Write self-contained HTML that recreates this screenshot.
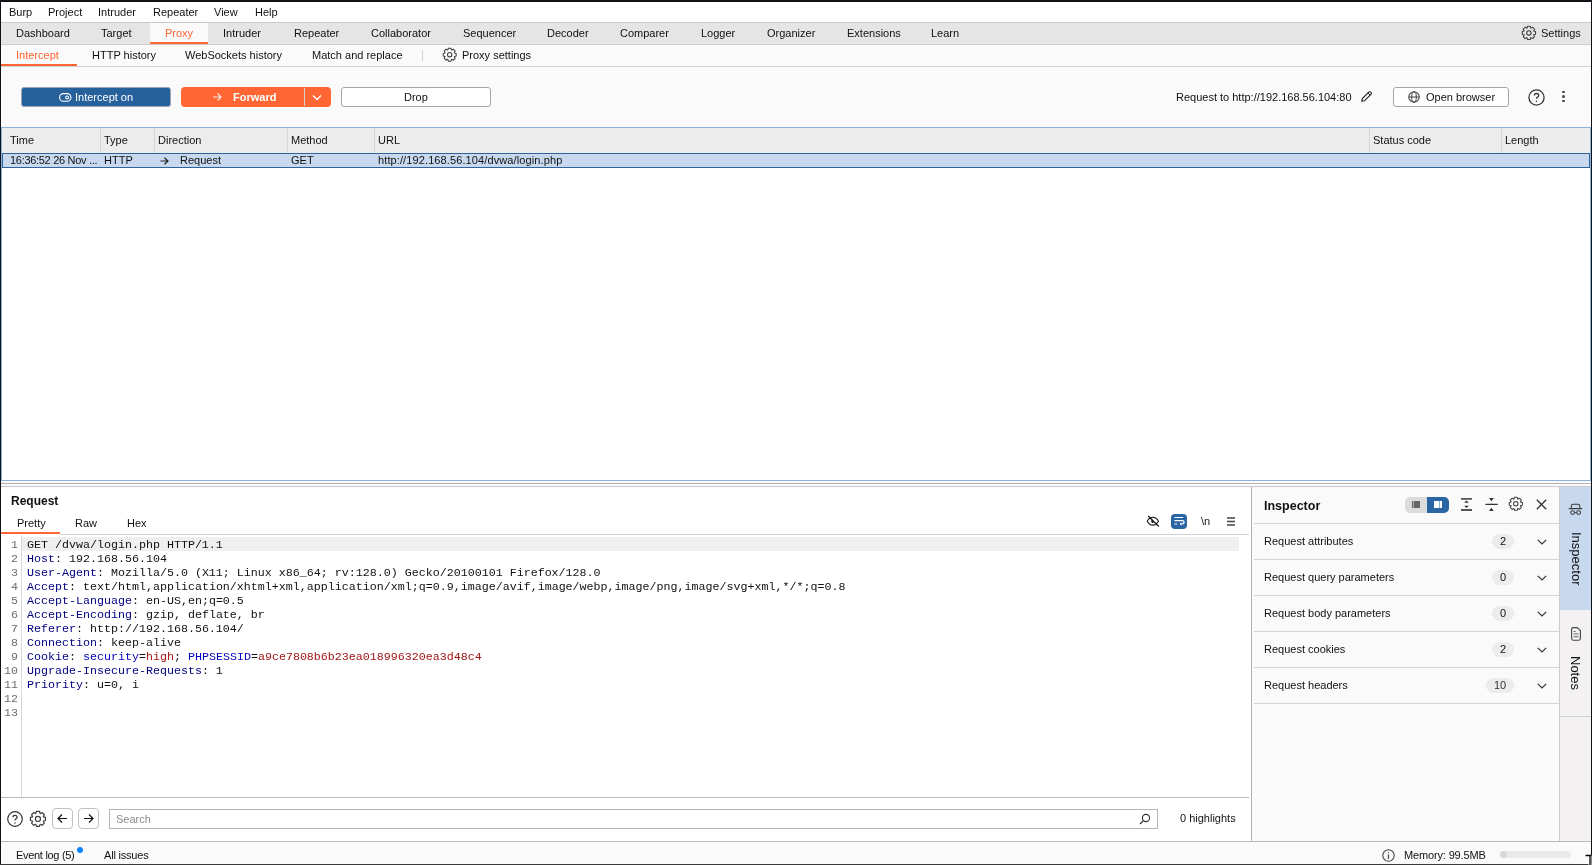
<!DOCTYPE html>
<html><head><meta charset="utf-8">
<style>
*{margin:0;padding:0;box-sizing:border-box}
html,body{width:1592px;height:865px;overflow:hidden;background:#fafafa}
body{position:relative;font-family:"Liberation Sans",sans-serif;font-size:11px;color:#111}
.t,.m{will-change:transform}
.a{position:absolute}
.t{position:absolute;white-space:nowrap;line-height:11px;font-size:11px}
.m{font-family:"Liberation Mono",monospace;font-size:11.6667px;line-height:14px;white-space:pre}
.hl{position:absolute;height:1px}
svg{position:absolute;overflow:visible}
</style></head><body>
<!-- window borders -->
<div class="a" style="left:0;top:0;width:1592px;height:2px;background:#0e1116"></div>
<div class="a" style="left:0;top:0;width:1px;height:865px;background:#0e1116"></div>
<div class="a" style="left:1591px;top:0;width:1px;height:865px;background:#0e1116"></div>
<div class="a" style="left:0;top:864px;width:1592px;height:1px;background:#3a3a3a"></div>

<!-- menu bar -->
<div class="a" style="left:1px;top:2px;width:1590px;height:20px;background:#fff"></div>
<div class="t" style="left:9px;top:7px">Burp</div>
<div class="t" style="left:48px;top:7px">Project</div>
<div class="t" style="left:98px;top:7px">Intruder</div>
<div class="t" style="left:153px;top:7px">Repeater</div>
<div class="t" style="left:214px;top:7px">View</div>
<div class="t" style="left:255px;top:7px">Help</div>
<div class="hl" style="left:1px;top:22px;width:1590px;background:#c9c9c9"></div>

<!-- main tabs -->
<div class="a" style="left:1px;top:23px;width:1590px;height:21px;background:#e5e5e5"></div>
<div class="a" style="left:150px;top:23px;width:58px;height:21px;background:#fafafa"></div>
<div class="a" style="left:150px;top:42px;width:58px;height:2px;background:#ff6633"></div>
<div class="t" style="left:16px;top:28px">Dashboard</div>
<div class="t" style="left:101px;top:28px">Target</div>
<div class="t" style="left:165px;top:28px;color:#ff6633">Proxy</div>
<div class="t" style="left:223px;top:28px">Intruder</div>
<div class="t" style="left:294px;top:28px">Repeater</div>
<div class="t" style="left:371px;top:28px">Collaborator</div>
<div class="t" style="left:463px;top:28px">Sequencer</div>
<div class="t" style="left:547px;top:28px">Decoder</div>
<div class="t" style="left:620px;top:28px">Comparer</div>
<div class="t" style="left:701px;top:28px">Logger</div>
<div class="t" style="left:767px;top:28px">Organizer</div>
<div class="t" style="left:847px;top:28px">Extensions</div>
<div class="t" style="left:931px;top:28px">Learn</div>
<svg style="left:1521.3px;top:25.3px" width="15.8" height="15.8" viewBox="0 0 24 24"><path fill="none" stroke="#3d3d3d" stroke-width="1.6" stroke-linejoin="round" d="M19.39 9.22 L22.09 9.95 L22.09 14.05 L19.39 14.78 L19.20 15.26 L20.58 17.69 L17.69 20.58 L15.26 19.20 L14.78 19.39 L14.05 22.09 L9.95 22.09 L9.22 19.39 L8.74 19.20 L6.31 20.58 L3.42 17.69 L4.80 15.26 L4.61 14.78 L1.91 14.05 L1.91 9.95 L4.61 9.22 L4.80 8.74 L3.42 6.31 L6.31 3.42 L8.74 4.80 L9.22 4.61 L9.95 1.91 L14.05 1.91 L14.78 4.61 L15.26 4.80 L17.69 3.42 L20.58 6.31 L19.20 8.74Z"/><circle cx="12" cy="12" r="3.4" fill="none" stroke="#3d3d3d" stroke-width="1.6"/></svg>
<div class="t" style="left:1541px;top:28px">Settings</div>
<div class="hl" style="left:1px;top:44px;width:1590px;background:#cbcfcf"></div>

<!-- sub tabs -->
<div class="a" style="left:1px;top:64px;width:76px;height:2px;background:#ff6633"></div>
<div class="t" style="left:16px;top:50px;color:#ff6633">Intercept</div>
<div class="t" style="left:92px;top:50px">HTTP history</div>
<div class="t" style="left:185px;top:50px">WebSockets history</div>
<div class="t" style="left:312px;top:50px">Match and replace</div>
<div class="a" style="left:422px;top:50px;width:1px;height:11px;background:#d0d0d0"></div>
<svg style="left:442.3px;top:47.3px" width="15.4" height="15.4" viewBox="0 0 24 24"><path fill="none" stroke="#3d3d3d" stroke-width="1.6" stroke-linejoin="round" d="M19.39 9.22 L22.09 9.95 L22.09 14.05 L19.39 14.78 L19.20 15.26 L20.58 17.69 L17.69 20.58 L15.26 19.20 L14.78 19.39 L14.05 22.09 L9.95 22.09 L9.22 19.39 L8.74 19.20 L6.31 20.58 L3.42 17.69 L4.80 15.26 L4.61 14.78 L1.91 14.05 L1.91 9.95 L4.61 9.22 L4.80 8.74 L3.42 6.31 L6.31 3.42 L8.74 4.80 L9.22 4.61 L9.95 1.91 L14.05 1.91 L14.78 4.61 L15.26 4.80 L17.69 3.42 L20.58 6.31 L19.20 8.74Z"/><circle cx="12" cy="12" r="3.4" fill="none" stroke="#3d3d3d" stroke-width="1.6"/></svg>
<div class="t" style="left:462px;top:50px">Proxy settings</div>
<div class="hl" style="left:1px;top:66px;width:1590px;background:#cfd3d3"></div>

<!-- toolbar -->
<div class="a" style="left:21px;top:87px;width:150px;height:20px;background:#27619c;border:1px solid #9aa6b3;border-radius:3px"></div>
<svg style="left:59px;top:92.5px" width="13" height="9" viewBox="0 0 13 9"><rect x="0.6" y="0.6" width="11.3" height="7.6" rx="3.8" fill="none" stroke="#fff" stroke-width="1.15"/><circle cx="8.1" cy="4.4" r="1.45" fill="none" stroke="#fff" stroke-width="1.05"/></svg>
<div class="t" style="left:75px;top:92px;color:#fff">Intercept on</div>

<div class="a" style="left:181px;top:87px;width:150px;height:20px;background:#ff6633;border-radius:4px"></div>
<div class="a" style="left:304px;top:88px;width:1px;height:18px;background:#d8d0cc"></div>
<svg style="left:212px;top:92px" width="10" height="10" viewBox="0 0 10 10"><path d="M1 5h8M5.5 1.5L9 5l-3.5 3.5" fill="none" stroke="#fde6dc" stroke-width="1.2"/></svg>
<div class="t" style="left:233px;top:92px;color:#fff;font-weight:bold">Forward</div>
<svg style="left:312px;top:94px" width="10" height="7" viewBox="0 0 10 7"><path d="M1 1.5l4 4 4-4" fill="none" stroke="#fff" stroke-width="1.3"/></svg>

<div class="a" style="left:341px;top:87px;width:150px;height:20px;background:#fff;border:1px solid #aaa5a5;border-radius:3px"></div>
<div class="t" style="left:404px;top:92px">Drop</div>

<div class="t" style="left:1176px;top:92px">Request to http://192.168.56.104:80</div>
<svg style="left:1360px;top:90px" width="13" height="13" viewBox="0 0 13 13"><path d="M1.7 11.3L2.4 8.5L8.7 2.2Q9.7 1.2 10.7 2.2L10.9 2.4Q11.9 3.4 10.9 4.4L4.6 10.7Z" fill="none" stroke="#222" stroke-width="1.1" stroke-linejoin="round"/><path d="M8 3L10.1 5.1" stroke="#222" stroke-width="1"/></svg>
<div class="a" style="left:1393px;top:87px;width:116px;height:20px;background:#fff;border:1px solid #aaa5a5;border-radius:3px"></div>
<svg style="left:1408px;top:91px" width="12" height="12" viewBox="0 0 12 12"><circle cx="6" cy="6" r="5.2" fill="none" stroke="#444" stroke-width="1.1"/><ellipse cx="6" cy="6" rx="2.3" ry="5.2" fill="none" stroke="#444" stroke-width="1"/><path d="M0.8 6h10.4" stroke="#444" stroke-width="1"/></svg>
<div class="t" style="left:1426px;top:92px">Open browser</div>
<svg style="left:1527.5px;top:88.5px" width="17" height="17" viewBox="0 0 17 17"><circle cx="8.5" cy="8.5" r="7.6" fill="none" stroke="#333" stroke-width="1.3"/><path d="M6.3 6.6c0-1.3 1-2.1 2.2-2.1s2.2.8 2.2 2c0 1.5-2.2 1.7-2.2 3.3" fill="none" stroke="#333" stroke-width="1.3"/><circle cx="8.5" cy="12.3" r=".8" fill="#333"/></svg>
<div class="a" style="left:1562px;top:90.6px;width:2.8px;height:2.8px;background:#444;border-radius:2px"></div>
<div class="a" style="left:1562px;top:95.2px;width:2.8px;height:2.8px;background:#444;border-radius:2px"></div>
<div class="a" style="left:1562px;top:99.5px;width:2.8px;height:2.8px;background:#444;border-radius:2px"></div>

<!-- table -->
<div class="a" style="left:1px;top:127px;width:1590px;height:354px;background:#fff;border:1px solid #8fb2dd"></div>
<div class="a" style="left:2px;top:128px;width:1588px;height:25px;background:#ececec"></div>
<div class="a" style="left:100px;top:128px;width:1px;height:25px;background:#d6d6d6"></div>
<div class="a" style="left:154px;top:128px;width:1px;height:25px;background:#d6d6d6"></div>
<div class="a" style="left:287px;top:128px;width:1px;height:25px;background:#d6d6d6"></div>
<div class="a" style="left:374px;top:128px;width:1px;height:25px;background:#d6d6d6"></div>
<div class="a" style="left:1369px;top:128px;width:1px;height:25px;background:#d6d6d6"></div>
<div class="a" style="left:1501px;top:128px;width:1px;height:25px;background:#d6d6d6"></div>
<div class="t" style="left:10px;top:135px">Time</div>
<div class="t" style="left:104px;top:135px">Type</div>
<div class="t" style="left:158px;top:135px">Direction</div>
<div class="t" style="left:291px;top:135px">Method</div>
<div class="t" style="left:378px;top:135px">URL</div>
<div class="t" style="left:1373px;top:135px">Status code</div>
<div class="t" style="left:1505px;top:135px">Length</div>
<div class="a" style="left:2px;top:153px;width:1588px;height:15px;background:#c8d9ef;border:1px solid #2f639c"></div>
<div class="t" style="left:10px;top:155px;letter-spacing:-0.3px">16:36:52 26 Nov ...</div>
<div class="t" style="left:104px;top:155px">HTTP</div>
<svg style="left:160px;top:157px" width="9" height="8" viewBox="0 0 9 8"><path d="M0.5 4h7.5M4.5 0.7L8 4 4.5 7.3" fill="none" stroke="#222" stroke-width="1.2"/></svg>
<div class="t" style="left:180px;top:155px">Request</div>
<div class="t" style="left:291px;top:155px">GET</div>
<div class="t" style="left:378px;top:155px;letter-spacing:0.11px">http://192.168.56.104/dvwa/login.php</div>

<!-- splitter -->
<div class="hl" style="left:1px;top:483px;width:1590px;background:#b8b2b2"></div>
<div class="hl" style="left:1px;top:486px;width:1590px;background:#c9c9c9"></div>

<!-- request panel -->
<div class="a" style="left:1px;top:487px;width:1250px;height:354px;background:#fff"></div>
<div class="t" style="left:11px;top:495px;font-size:12px;line-height:12px;font-weight:bold">Request</div>
<div class="t" style="left:17px;top:518px">Pretty</div>
<div class="t" style="left:75px;top:518px">Raw</div>
<div class="t" style="left:127px;top:518px">Hex</div>
<div class="a" style="left:1px;top:532px;width:59px;height:2px;background:#ff6633"></div>
<div class="hl" style="left:60px;top:534px;width:1189px;background:#cfd3d3"></div>

<!-- editor icons -->
<svg style="left:1146px;top:515px" width="14" height="13" viewBox="0 0 14 13"><path d="M1.2 6.2C2.6 3.7 4.5 2.3 6.8 2.3S11 3.7 12.5 6.2C11 8.7 9.1 10.1 6.8 10.1S2.6 8.7 1.2 6.2z" fill="none" stroke="#111" stroke-width="1.05"/><path d="M6.4 4.4A1.9 1.9 0 0 0 7.6 8Z" fill="#111"/><path d="M2.2 1L12.8 11.5" stroke="#111" stroke-width="1.15"/></svg>
<div class="a" style="left:1171px;top:514px;width:16px;height:15px;background:#2a65a3;border-radius:4px"></div>
<svg style="left:1171px;top:514px" width="16" height="15" viewBox="0 0 16 15"><path d="M3.4 3.5H12.2M3.4 6.6H11.2Q13.1 6.6 13.1 8.3Q13.1 10 11.2 10H9.3M3.4 10H6.2" fill="none" stroke="#fff" stroke-width="1.15"/><path d="M10.5 8.7L9.2 10 10.5 11.3" fill="none" stroke="#fff" stroke-width="1"/></svg>
<div class="t" style="left:1201px;top:516px;font-size:11px">\n</div>
<svg style="left:1227px;top:517px" width="9" height="9" viewBox="0 0 9 9"><path d="M0 1h8M0 4.5h8M0 8h8" stroke="#444" stroke-width="1.3"/></svg>

<!-- editor -->
<div class="a" style="left:1px;top:535px;width:1250px;height:262px;background:#fff"></div>
<div class="a" style="left:21px;top:535px;width:1px;height:262px;background:#d9d9d9"></div>
<div class="a" style="left:22px;top:537px;width:1217px;height:14px;background:#efefef"></div>
<div class="m a" style="left:0;top:538px;width:18px;text-align:right;color:#6d6d6d">1</div>
<div class="m a" style="left:27px;top:538px">GET /dvwa/login.php HTTP/1.1</div>
<div class="m a" style="left:0;top:552px;width:18px;text-align:right;color:#6d6d6d">2</div>
<div class="m a" style="left:27px;top:552px"><span style="color:#000080">Host</span>: 192.168.56.104</div>
<div class="m a" style="left:0;top:566px;width:18px;text-align:right;color:#6d6d6d">3</div>
<div class="m a" style="left:27px;top:566px"><span style="color:#000080">User-Agent</span>: Mozilla/5.0 (X11; Linux x86_64; rv:128.0) Gecko/20100101 Firefox/128.0</div>
<div class="m a" style="left:0;top:580px;width:18px;text-align:right;color:#6d6d6d">4</div>
<div class="m a" style="left:27px;top:580px"><span style="color:#000080">Accept</span>: text/html,application/xhtml+xml,application/xml;q=0.9,image/avif,image/webp,image/png,image/svg+xml,*/*;q=0.8</div>
<div class="m a" style="left:0;top:594px;width:18px;text-align:right;color:#6d6d6d">5</div>
<div class="m a" style="left:27px;top:594px"><span style="color:#000080">Accept-Language</span>: en-US,en;q=0.5</div>
<div class="m a" style="left:0;top:608px;width:18px;text-align:right;color:#6d6d6d">6</div>
<div class="m a" style="left:27px;top:608px"><span style="color:#000080">Accept-Encoding</span>: gzip, deflate, br</div>
<div class="m a" style="left:0;top:622px;width:18px;text-align:right;color:#6d6d6d">7</div>
<div class="m a" style="left:27px;top:622px"><span style="color:#000080">Referer</span>: http://192.168.56.104/</div>
<div class="m a" style="left:0;top:636px;width:18px;text-align:right;color:#6d6d6d">8</div>
<div class="m a" style="left:27px;top:636px"><span style="color:#000080">Connection</span>: keep-alive</div>
<div class="m a" style="left:0;top:650px;width:18px;text-align:right;color:#6d6d6d">9</div>
<div class="m a" style="left:27px;top:650px"><span style="color:#000080">Cookie</span>: <span style="color:#0000c0">security</span>=<span style="color:#a31515">high</span>; <span style="color:#0000c0">PHPSESSID</span>=<span style="color:#a31515">a9ce7808b6b23ea018996320ea3d48c4</span></div>
<div class="m a" style="left:0;top:664px;width:18px;text-align:right;color:#6d6d6d">10</div>
<div class="m a" style="left:27px;top:664px"><span style="color:#000080">Upgrade-Insecure-Requests</span>: 1</div>
<div class="m a" style="left:0;top:678px;width:18px;text-align:right;color:#6d6d6d">11</div>
<div class="m a" style="left:27px;top:678px"><span style="color:#000080">Priority</span>: u=0, i</div>
<div class="m a" style="left:0;top:692px;width:18px;text-align:right;color:#6d6d6d">12</div>
<div class="m a" style="left:0;top:706px;width:18px;text-align:right;color:#6d6d6d">13</div>
<div class="hl" style="left:1px;top:797px;width:1248px;background:#bdb8b8"></div>

<!-- bottom search bar -->
<svg style="left:7px;top:811px" width="17" height="17" viewBox="0 0 17 17"><circle cx="8" cy="8" r="7.3" fill="none" stroke="#333" stroke-width="1.2"/><path d="M5.9 6.3c0-1.3 1-2 2.1-2s2.1.8 2.1 1.9c0 1.4-2.1 1.6-2.1 3.2" fill="none" stroke="#333" stroke-width="1.2"/><circle cx="8" cy="11.9" r=".75" fill="#333"/></svg>
<svg style="left:28.8px;top:809.6px" width="17.9" height="17.9" viewBox="0 0 24 24"><path fill="none" stroke="#3d3d3d" stroke-width="1.6" stroke-linejoin="round" d="M19.39 9.22 L22.09 9.95 L22.09 14.05 L19.39 14.78 L19.20 15.26 L20.58 17.69 L17.69 20.58 L15.26 19.20 L14.78 19.39 L14.05 22.09 L9.95 22.09 L9.22 19.39 L8.74 19.20 L6.31 20.58 L3.42 17.69 L4.80 15.26 L4.61 14.78 L1.91 14.05 L1.91 9.95 L4.61 9.22 L4.80 8.74 L3.42 6.31 L6.31 3.42 L8.74 4.80 L9.22 4.61 L9.95 1.91 L14.05 1.91 L14.78 4.61 L15.26 4.80 L17.69 3.42 L20.58 6.31 L19.20 8.74Z"/><circle cx="12" cy="12" r="3.4" fill="none" stroke="#3d3d3d" stroke-width="1.6"/></svg>
<div class="a" style="left:52px;top:808px;width:21px;height:21px;border:1px solid #c5c0c0;border-radius:4px;background:#fff"></div>
<svg style="left:57px;top:813px" width="11" height="11" viewBox="0 0 11 11"><path d="M10 5.5H1.2M5 1.5l-4 4 4 4" fill="none" stroke="#111" stroke-width="1.2"/></svg>
<div class="a" style="left:78px;top:808px;width:21px;height:21px;border:1px solid #c5c0c0;border-radius:4px;background:#fff"></div>
<svg style="left:83px;top:813px" width="11" height="11" viewBox="0 0 11 11"><path d="M1 5.5h8.8M6 1.5l4 4-4 4" fill="none" stroke="#111" stroke-width="1.2"/></svg>
<div class="a" style="left:109px;top:809px;width:1049px;height:20px;background:#fff;border:1px solid #b9b3b3"></div>
<div class="t" style="left:116px;top:814px;color:#8a8a8a">Search</div>
<svg style="left:1139px;top:813px" width="12" height="12" viewBox="0 0 12 12"><circle cx="7" cy="5" r="3.6" fill="none" stroke="#333" stroke-width="1.1"/><path d="M4.4 7.6L1 11" stroke="#333" stroke-width="1.2"/></svg>
<div class="t" style="left:1180px;top:813px">0 highlights</div>

<!-- inspector -->
<div class="a" style="left:1251px;top:487px;width:1px;height:354px;background:#b5b0b0"></div>
<div class="a" style="left:1252px;top:487px;width:307px;height:354px;background:#fafafa"></div>
<div class="t" style="left:1264px;top:500px;font-size:12.5px;line-height:12px;font-weight:bold">Inspector</div>
<div class="a" style="left:1405px;top:497px;width:44px;height:16px;background:#dcdcdc;border-radius:5px"></div>
<div class="a" style="left:1427px;top:497px;width:22px;height:16px;background:#2a65a3;border-radius:0 5px 5px 0"></div>
<div class="a" style="left:1412px;top:501px;width:8px;height:7px;background:#666"></div>
<div class="a" style="left:1413px;top:501px;width:1px;height:7px;background:#aaa"></div>
<div class="a" style="left:1434px;top:501px;width:8px;height:7px;background:#fff"></div>
<div class="a" style="left:1439px;top:501px;width:1px;height:7px;background:#8db0d3"></div>

<svg style="left:1456px;top:494px" width="46" height="22" viewBox="0 0 46 22"><path d="M5 4.8h11M5 16h11" stroke="#555" stroke-width="1.8"/><path d="M8.2 8.8L10.5 6.6 12.8 8.8zM8.2 11.8L10.5 14 12.8 11.8z" fill="#333"/><path d="M30 10.4h11.2" stroke="#333" stroke-width="1.3" stroke-linecap="round"/><path d="M33 4h4.8L35.4 7.2zM33 17h4.8L35.4 13.8z" fill="#333"/></svg>
<svg style="left:1508.2px;top:496.2px" width="15.6" height="15.6" viewBox="0 0 24 24"><path fill="none" stroke="#3d3d3d" stroke-width="1.6" stroke-linejoin="round" d="M19.39 9.22 L22.09 9.95 L22.09 14.05 L19.39 14.78 L19.20 15.26 L20.58 17.69 L17.69 20.58 L15.26 19.20 L14.78 19.39 L14.05 22.09 L9.95 22.09 L9.22 19.39 L8.74 19.20 L6.31 20.58 L3.42 17.69 L4.80 15.26 L4.61 14.78 L1.91 14.05 L1.91 9.95 L4.61 9.22 L4.80 8.74 L3.42 6.31 L6.31 3.42 L8.74 4.80 L9.22 4.61 L9.95 1.91 L14.05 1.91 L14.78 4.61 L15.26 4.80 L17.69 3.42 L20.58 6.31 L19.20 8.74Z"/><circle cx="12" cy="12" r="3.4" fill="none" stroke="#3d3d3d" stroke-width="1.6"/></svg>
<svg style="left:1536px;top:499px" width="11" height="11" viewBox="0 0 11 11"><path d="M0.8 0.8l9.4 9.4M10.2 0.8L0.8 10.2" stroke="#333" stroke-width="1.3"/></svg>
<div class="hl" style="left:1254px;top:523px;width:305px;background:#d5d5d5"></div>
<div class="t" style="left:1264px;top:536px">Request attributes</div>
<div class="a" style="left:1492px;top:534px;width:22px;height:15px;background:#ececec;border-radius:8px"></div>
<div class="t" style="left:1492px;top:536px;width:22px;text-align:center">2</div>
<svg style="left:1537px;top:538.7px" width="10" height="6" viewBox="0 0 10 6"><path d="M0.8 0.8L5 5 9.2 0.8" fill="none" stroke="#333" stroke-width="1.2"/></svg>
<div class="hl" style="left:1254px;top:559px;width:305px;background:#d5d5d5"></div>
<div class="t" style="left:1264px;top:572px">Request query parameters</div>
<div class="a" style="left:1492px;top:570px;width:22px;height:15px;background:#ececec;border-radius:8px"></div>
<div class="t" style="left:1492px;top:572px;width:22px;text-align:center">0</div>
<svg style="left:1537px;top:574.7px" width="10" height="6" viewBox="0 0 10 6"><path d="M0.8 0.8L5 5 9.2 0.8" fill="none" stroke="#333" stroke-width="1.2"/></svg>
<div class="hl" style="left:1254px;top:595px;width:305px;background:#d5d5d5"></div>
<div class="t" style="left:1264px;top:608px">Request body parameters</div>
<div class="a" style="left:1492px;top:606px;width:22px;height:15px;background:#ececec;border-radius:8px"></div>
<div class="t" style="left:1492px;top:608px;width:22px;text-align:center">0</div>
<svg style="left:1537px;top:610.7px" width="10" height="6" viewBox="0 0 10 6"><path d="M0.8 0.8L5 5 9.2 0.8" fill="none" stroke="#333" stroke-width="1.2"/></svg>
<div class="hl" style="left:1254px;top:631px;width:305px;background:#d5d5d5"></div>
<div class="t" style="left:1264px;top:644px">Request cookies</div>
<div class="a" style="left:1492px;top:642px;width:22px;height:15px;background:#ececec;border-radius:8px"></div>
<div class="t" style="left:1492px;top:644px;width:22px;text-align:center">2</div>
<svg style="left:1537px;top:646.7px" width="10" height="6" viewBox="0 0 10 6"><path d="M0.8 0.8L5 5 9.2 0.8" fill="none" stroke="#333" stroke-width="1.2"/></svg>
<div class="hl" style="left:1254px;top:667px;width:305px;background:#d5d5d5"></div>
<div class="t" style="left:1264px;top:680px">Request headers</div>
<div class="a" style="left:1486px;top:678px;width:28px;height:15px;background:#ececec;border-radius:8px"></div>
<div class="t" style="left:1486px;top:680px;width:28px;text-align:center;color:#333">10</div>
<svg style="left:1537px;top:682.7px" width="10" height="6" viewBox="0 0 10 6"><path d="M0.8 0.8L5 5 9.2 0.8" fill="none" stroke="#333" stroke-width="1.2"/></svg>
<div class="hl" style="left:1254px;top:703px;width:305px;background:#d5d5d5"></div>

<!-- right sidebar -->
<div class="a" style="left:1559px;top:487px;width:1px;height:354px;background:#c9cdcd"></div>
<div class="a" style="left:1560px;top:487px;width:31px;height:354px;background:#f3f1f1"></div>
<div class="a" style="left:1560px;top:487px;width:31px;height:123px;background:#c8d9ef"></div>
<div class="hl" style="left:1560px;top:716px;width:31px;background:#d0d0d0"></div>
<div class="t" style="left:1560px;top:520px;width:31px;height:60px;font-size:13px;line-height:13px"><div style="position:absolute;left:9px;top:12px;transform:rotate(90deg);transform-origin:0 0;left:22.5px">Inspector</div></div>
<div class="t" style="left:1560px;top:650px;width:31px;height:40px;font-size:13px;line-height:13px"><div style="position:absolute;top:6px;transform:rotate(90deg);transform-origin:0 0;left:22px">Notes</div></div>
<svg style="left:1568px;top:503px" width="15" height="13" viewBox="0 0 15 13"><path d="M3.3 5.5V3.2Q3.3 1.3 5.2 1.3H10Q11.8 1.3 11.8 3.2V5.5" fill="none" stroke="#3d3d3d" stroke-width="1.1"/><path d="M1.2 5.6H13.8" stroke="#3d3d3d" stroke-width="1.3" stroke-linecap="round"/><circle cx="4.6" cy="9.6" r="1.9" fill="none" stroke="#3d3d3d" stroke-width="1.1"/><circle cx="10.6" cy="9.6" r="1.9" fill="none" stroke="#3d3d3d" stroke-width="1.1"/><path d="M6.5 9.6h2.2" stroke="#3d3d3d" stroke-width="1"/></svg>
<svg style="left:1570px;top:627px" width="12" height="14" viewBox="0 0 12 14"><path d="M1.6 2.2Q1.6 0.6 3 0.6H7.3L10.4 3.7V11.6Q10.4 13.2 9 13.2H3Q1.6 13.2 1.6 11.6z" fill="none" stroke="#444" stroke-width="1.1" stroke-linejoin="round"/><path d="M3.6 4.5h2M3.6 7h5M3.6 9.8h5" stroke="#555" stroke-width="0.9"/></svg>

<!-- status bar -->
<div class="hl" style="left:1px;top:841px;width:1590px;background:#bdb8b8"></div>
<div class="a" style="left:1px;top:842px;width:1590px;height:22px;background:#fafafa"></div>
<div class="t" style="left:16px;top:850px;letter-spacing:-0.3px">Event log (5)</div>
<div class="a" style="left:77px;top:847px;width:6px;height:6px;background:#0a84ff;border-radius:50%"></div>
<div class="t" style="left:104px;top:850px;letter-spacing:-0.2px">All issues</div>
<svg style="left:1381.5px;top:848.5px" width="13" height="13" viewBox="0 0 13 13"><circle cx="6.5" cy="6.5" r="5.7" fill="none" stroke="#444" stroke-width="1.1"/><path d="M6.5 5.5v4.3" stroke="#444" stroke-width="1.2"/><circle cx="6.5" cy="3.6" r=".7" fill="#444"/></svg>
<div class="t" style="left:1404px;top:850px;letter-spacing:-0.15px">Memory: 99.5MB</div>
<div class="a" style="left:1500px;top:851px;width:71px;height:7px;background:#ebebeb;border-radius:4px"></div>
<div class="a" style="left:1500px;top:851px;width:7px;height:7px;background:#d8d8d8;border-radius:4px"></div>
<svg style="left:1584px;top:852px" width="8" height="13" viewBox="0 0 8 13"><path d="M1.5 3.5H7M6 3.5V13" fill="none" stroke="#fff" stroke-width="3"/><path d="M1.5 3.5H7M6 3.5V13" fill="none" stroke="#000" stroke-width="1.3"/></svg>
</body></html>
